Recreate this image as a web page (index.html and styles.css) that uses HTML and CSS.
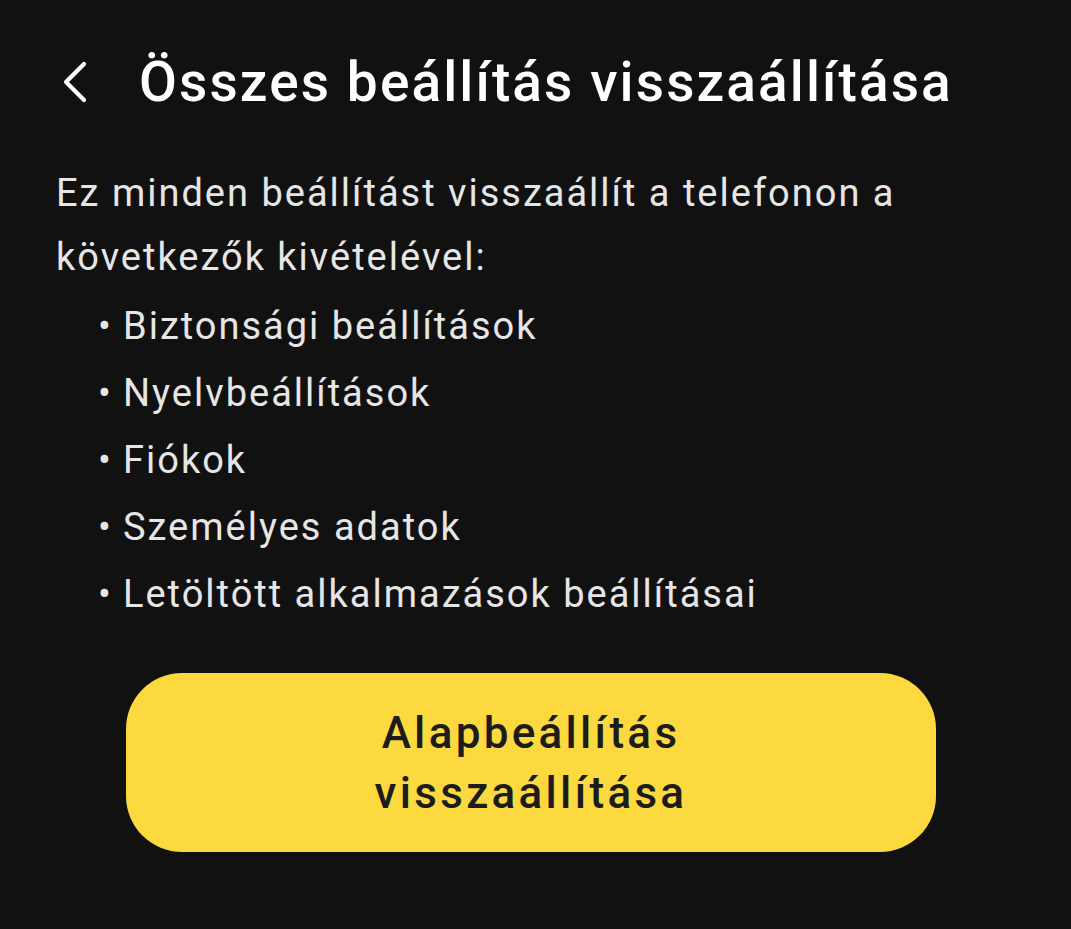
FILE: index.html
```html
<!DOCTYPE html>
<html lang="hu">
<head>
<meta charset="utf-8">
<link rel="stylesheet" href="styles.css">
</head>
<body>
<div class="screen">
  <header class="top">
    <span class="back">
      <svg width="32" height="44" viewBox="0 0 32 44"><path d="M26 4 L8 22 L26 40" fill="none" stroke="#fff" stroke-width="4.2" stroke-linecap="round" stroke-linejoin="round"/></svg>
    </span>
    <h1 class="title">Összes beállítás visszaállítása</h1>
  </header>
  <p class="desc">Ez minden beállítást visszaállít a telefonon a következők kivételével:</p>
  <ul class="list">
    <li>Biztonsági beállítások</li>
    <li>Nyelvbeállítások</li>
    <li>Fiókok</li>
    <li>Személyes adatok</li>
    <li>Letöltött alkalmazások beállításai</li>
  </ul>
  <div class="actions">
    <button class="reset">Alapbeállítás<br>visszaállítása</button>
  </div>
</div>
</body>
</html>
```
FILE: styles.css
```css
html, body {
  margin: 0;
  padding: 0;
  background: #111111;
}
body {
  width: 1071px;
  height: 929px;
  overflow: hidden;
  font-family: Roboto, "Noto Sans", sans-serif;
}
.screen {
  padding: 44px 0 0 56px;
}
.top {
  display: flex;
  align-items: center;
  height: 76px;
}
.back {
  display: flex;
  width: 81px;
  margin-left: 2px;
}
.title {
  margin: 0;
  color: #ffffff;
  font-size: 55px;
  font-weight: 500;
  letter-spacing: 2.1px;
  white-space: nowrap;
}
.desc {
  margin: 41px 0 0 0;
  width: 960px;
  color: #e6e6e6;
  font-size: 38px;
  line-height: 64px;
  letter-spacing: 2px;
}
.list {
  list-style: none;
  margin: 4px 0 0 0;
  padding: 0 0 0 42px;
  color: #e6e6e6;
  font-size: 38px;
  line-height: 67px;
  letter-spacing: 2px;
}
.list li {
  display: flex;
}
.list li::before {
  content: "•";
  width: 25px;
  flex: none;
  letter-spacing: 0;
}
.actions {
  margin: 45px 0 0 70px;
}
.reset {
  width: 810px;
  height: 179px;
  border: none;
  border-radius: 56px;
  background: #fcd93e;
  color: #1c1c1c;
  font-family: Roboto, "Noto Sans", sans-serif;
  font-size: 44px;
  font-weight: 500;
  line-height: 60px;
  letter-spacing: 3.3px;
  padding: 0;
}
```
